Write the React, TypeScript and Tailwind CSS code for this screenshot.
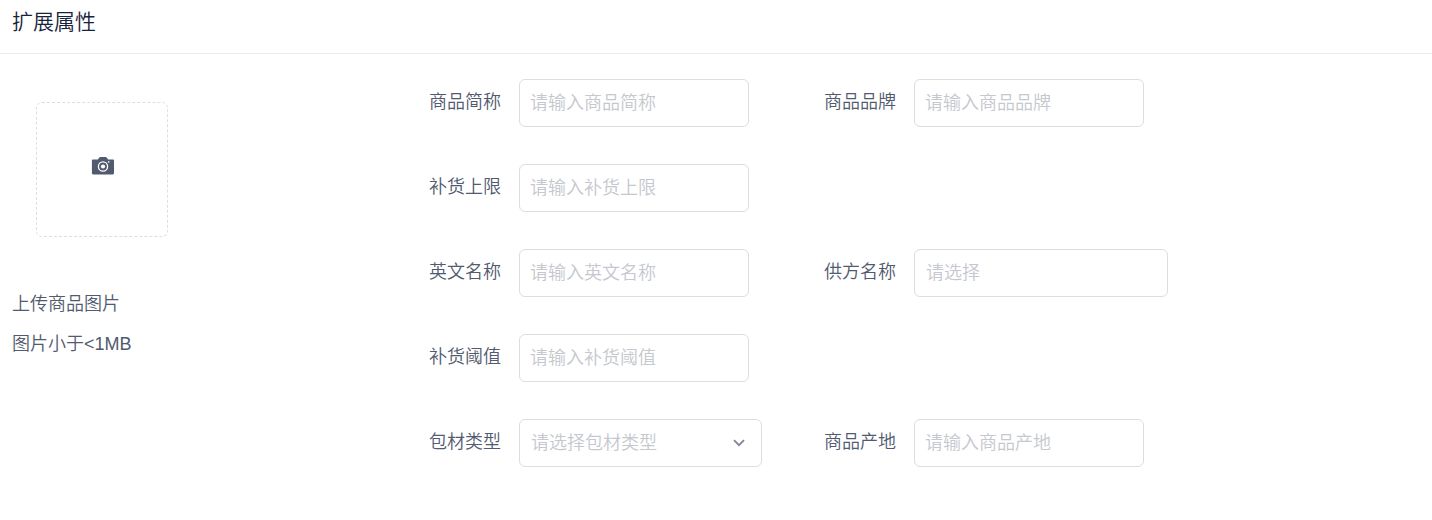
import { useState } from 'react';
import type { ReactNode } from 'react';

const controlClass =
  'h-12 rounded-md border border-[#dcdde1] bg-white text-lg text-[#515a6e] outline-none placeholder:text-[#c5c8ce] placeholder:opacity-100 focus:border-[#57a3f3]';

function CameraIcon() {
  return (
    <svg viewBox="0 0 24 20" className="h-5 w-6" aria-hidden="true">
      <path
        fill="#515a6e"
        d="M2.2 3.6h4.1c.5 0 .8-.3 1-.7l.8-1.2c.3-.5.8-.8 1.4-.8h5c.6 0 1.1.3 1.400.8l.8 1.2c.2.4.5.7 1 .7h4.1c.8 0 1.2.5 1.2 1.2v12.3c0 .8-.5 1.300-1.2 1.300H2.2c-.8 0-1.300-.5-1.300-1.300V4.800c0-.7.5-1.200 1.300-1.200z"
      />
      <circle cx="12" cy="10.5" r="4.600" fill="none" stroke="#fff" strokeWidth="1.3" />
      <circle cx="12" cy="10.5" r="2.1" fill="#fff" />
      <circle cx="17.7" cy="5.9" r=".8" fill="#fff" />
    </svg>
  );
}

function Field({ id, label, children }: { id: string; label: string; children: ReactNode }) {
  return (
    <div className="flex">
      <label htmlFor={id} className="w-[90px] shrink-0 pt-[9px] text-lg leading-7 text-[#515a6e]">
        {label}
      </label>
      {children}
    </div>
  );
}

function TextField({ id, label }: { id: string; label: string }) {
  return (
    <Field id={id} label={label}>
      <input id={id} type="text" placeholder={`请输入${label}`} className={`${controlClass} w-[230px] px-2.5`} />
    </Field>
  );
}

export default function App() {
  const [packing, setPacking] = useState('');
  const [supplier, setSupplier] = useState('');

  return (
    <section className="bg-white font-['Liberation_Sans','Noto_Sans_CJK_SC',sans-serif] font-[350]">
      <header className="border-b border-[#e8eaec] px-3 pt-2 pb-[17px]">
        <h2 className="text-[21px] leading-7 text-[#17233d]">扩展属性</h2>
      </header>

      <div className="flex px-3 pt-[25px]">
        <div className="w-[417px] shrink-0 text-lg text-[#515a6e]">
          <button
            type="button"
            aria-label="上传商品图片"
            className="mt-[23px] ml-6 flex h-[135px] w-[132px] items-center justify-center rounded-md border border-dashed border-[#dcdee2] pb-2 pl-0.5 hover:border-[#57a3f3]"
          >
            <CameraIcon />
          </button>
          <p className="mt-[47px] leading-10">上传商品图片</p>
          <p className="leading-10">图片小于&lt;1MB</p>
        </div>

        <form className="grid grid-cols-[395px_auto] content-start justify-start gap-y-[37px] pb-12">
          <TextField id="short-name" label="商品简称" />
          <TextField id="brand" label="商品品牌" />
          <div className="col-span-2">
            <TextField id="restock-limit" label="补货上限" />
          </div>
          <TextField id="english-name" label="英文名称" />
          <Field id="supplier" label="供方名称">
            <select
              id="supplier"
              value={supplier}
              onChange={(e) => setSupplier(e.target.value)}
              className={`${controlClass} w-[254px] appearance-none px-[11px] ${supplier ? '' : 'text-[#c5c8ce]!'}`}
            >
              <option value="">请选择</option>
            </select>
          </Field>
          <div className="col-span-2">
            <TextField id="restock-threshold" label="补货阈值" />
          </div>
          <Field id="packing" label="包材类型">
            <div className="relative">
              <select
                id="packing"
                value={packing}
                onChange={(e) => setPacking(e.target.value)}
                className={`${controlClass} w-[243px] appearance-none pr-10 pl-[11px] ${packing ? '' : 'text-[#c5c8ce]!'}`}
              >
                <option value="">请选择包材类型</option>
              </select>
              <svg
                viewBox="0 0 12 8"
                aria-hidden="true"
                className="pointer-events-none absolute top-5 right-[17px] h-2 w-3"
              >
                <path d="M1 1.2 6 6.2 11 1.2" fill="none" stroke="#808695" strokeWidth="1.8" />
              </svg>
            </div>
          </Field>
          <TextField id="origin" label="商品产地" />
        </form>
      </div>
    </section>
  );
}
